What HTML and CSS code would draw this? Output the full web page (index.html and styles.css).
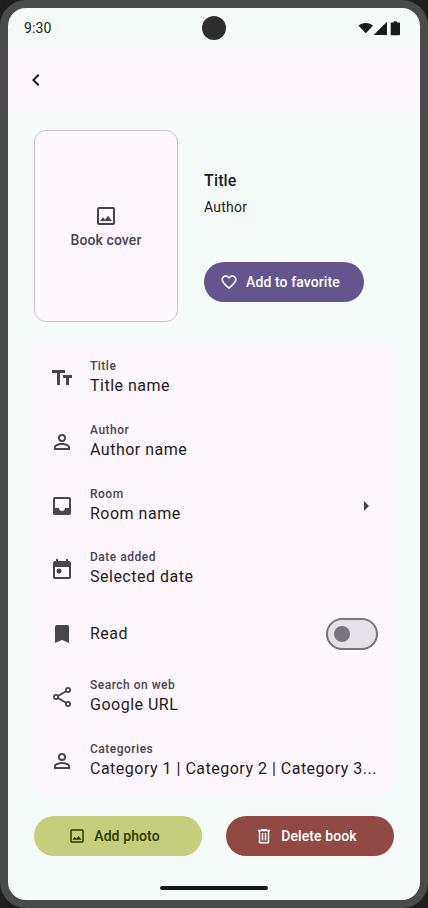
FILE: index.html
```html
<!DOCTYPE html>
<html lang="en">
<head>
<meta charset="utf-8">
<title>Book details</title>
<link rel="stylesheet" href="styles.css">
</head>
<body>
<svg class="defs" width="0" height="0">
  <symbol id="person" viewBox="0 0 24 24"><path d="M12 5.900a2.100 2.100 0 1 1 0 4.200 2.100 2.100 0 0 1 0-4.200m0 9c2.970 0 6.100 1.460 6.100 2.100v1.100H5.900V17c0-.64 3.130-2.100 6.100-2.100M12 4a4 4 0 1 0 0 8 4 4 0 0 0 0-8m0 9c-2.670 0-8 1.340-8 4v3h16v-3c0-2.660-5.330-4-8-4"/></symbol>
  <symbol id="image" viewBox="0 0 24 24"><path d="M19 5v14H5V5h14m0-2H5c-1.100 0-2 .9-2 2v14c0 1.100.9 2 2 2h14c1.100 0 2-.9 2-2V5c0-1.100-.9-2-2-2m-4.860 8.860-3 3.870L9 13.140 6 17h12z"/></symbol>
</svg>
<div class="phone">
  <header class="status">
    <span class="time">9:30</span>
    <span class="camera"></span>
    <svg class="signals" width="46" height="18" viewBox="0 0 46 18"><path d="M3.600 6.700C7 3 14.600 3 18 6.700L10.800 14.200z"/><path d="M32 2.800v13.200H18.600z"/><path d="M38.800 2.300h3v1.300H44c.6 0 1 .4 1 1v10.600c0 .6-.4 1-1 1h-7.300c-.6 0-1-.4-1-1V4.600c0-.6.400-1 1-1h2.100z"/></svg>
  </header>
  <nav class="appbar">
    <svg class="icon" viewBox="0 0 24 24"><path d="M15.400 7.400 14 6l-6 6 6 6 1.400-1.400L10.800 12z"/></svg>
  </nav>
  <main class="content">
    <section class="hero">
      <div class="cover"><svg class="icon" viewBox="0 0 24 24"><use href="#image"/></svg><span>Book cover</span></div>
      <div class="info">
        <h1>Title</h1>
        <p>Author</p>
        <button class="btn favorite"><svg viewBox="0 0 24 24"><path d="M16.500 3c-1.740 0-3.410.81-4.500 2.090C10.910 3.810 9.240 3 7.500 3 4.420 3 2 5.420 2 8.500c0 3.780 3.400 6.860 8.550 11.540L12 21.350l1.450-1.320C18.600 15.360 22 12.280 22 8.500 22 5.420 19.580 3 16.500 3m-4.400 15.550-.1.100-.1-.1C7.140 14.240 4 11.390 4 8.500 4 6.500 5.500 5 7.500 5c1.540 0 3.040.99 3.570 2.360h1.870C13.460 5.990 14.960 5 16.500 5c2 0 3.500 1.500 3.500 3.500 0 2.890-3.140 5.740-7.900 10.050"/></svg>Add to favorite</button>
      </div>
    </section>
    <section class="list">
      <div class="row"><svg class="icon" viewBox="0 0 24 24"><path d="M2 4v3h5v12h3V7h5V4zm20 5h-9v3h3v7h3v-7h3z"/></svg><div class="text"><small>Title</small><span>Title name</span></div></div>
      <div class="row"><svg class="icon" viewBox="0 0 24 24"><use href="#person"/></svg><div class="text"><small>Author</small><span>Author name</span></div></div>
      <div class="row"><svg class="icon" viewBox="0 0 24 24"><path d="M19 3H5c-1.100 0-2 .9-2 2v14c0 1.100.9 2 2 2h14c1.100 0 2-.9 2-2V5c0-1.100-.9-2-2-2m0 11h-4a3 3 0 0 1-6 0H5V5h14z"/></svg><div class="text"><small>Room</small><span>Room name</span></div><svg class="icon" viewBox="0 0 24 24"><path d="m10 17 5-5-5-5z"/></svg></div>
      <div class="row"><svg class="icon" viewBox="0 0 24 24"><path d="M19 4h-1V2h-2v2H8V2H6v2H5c-1.100 0-2 .9-2 2v14c0 1.100.9 2 2 2h14c1.100 0 2-.9 2-2V6c0-1.100-.9-2-2-2m0 16H5V10h14z"/><circle cx="9" cy="14" r="2.500"/></svg><div class="text"><small>Date added</small><span>Selected date</span></div></div>
      <div class="row single"><svg class="icon" viewBox="0 0 24 24"><path d="M17 3H7c-1.100 0-2 .9-2 2v16l7-3 7 3V5c0-1.100-.9-2-2-2"/></svg><div class="text"><span>Read</span></div><div class="switch"><i></i></div></div>
      <div class="row"><svg class="icon line" viewBox="0 0 24 24"><path d="m8 11 8-4.800M8 13l8 4.800"/><circle cx="6" cy="12" r="2.100"/><circle cx="18" cy="5" r="2.100"/><circle cx="18" cy="19" r="2.100"/></svg><div class="text"><small>Search on web</small><span>Google URL</span></div></div>
      <div class="row"><svg class="icon" viewBox="0 0 24 24"><use href="#person"/></svg><div class="text"><small>Categories</small><span>Category 1 | Category 2 | Category 3...</span></div></div>
    </section>
    <section class="actions">
      <button class="btn photo"><svg viewBox="0 0 24 24"><use href="#image"/></svg>Add photo</button>
      <button class="btn delete"><svg viewBox="0 0 24 24"><path fill-rule="evenodd" d="M9 2.500h6l1 1h4v2h-1V20a2 2 0 0 1-2 2H7a2 2 0 0 1-2-2V5.500H4v-2h4zm-2 3V20h10V5.500zM9 8h2v10H9zm4 0h2v10h-2z"/></svg>Delete book</button>
    </section>
  </main>
  <footer class="home"><span></span></footer>
</div>
</body>
</html>
```

FILE: styles.css
```css
* { box-sizing: border-box; }
body { margin: 0; background: #1e1e1e; font-family: Roboto, sans-serif; color: #1d1b20; }
.defs { display: block; width: 0; height: 0; }
svg { fill: currentColor; flex: none; display: block; }
.phone { width: 428px; height: 908px; border: 8px solid #4a4a4a; border-radius: 26px; background: #f5fbf8; overflow: hidden; display: flex; flex-direction: column; }
.status { height: 40px; padding: 0 16px; display: grid; grid-template-columns: 1fr 24px 1fr; align-items: center; color: #171d1b; }
.time { font-size: 14px; line-height: 20px; letter-spacing: .14px; }
.camera { width: 24px; height: 24px; border-radius: 50%; background: #2e2e2e; }
.signals { justify-self: end; margin-right: 3px; }
.appbar { height: 64px; background: #fef7ff; padding: 0 16px; display: flex; align-items: center; }
.icon { width: 24px; height: 24px; }
.content { padding: 18px 26px 0; }
.hero { display: flex; gap: 26px; height: 192px; }
.cover { width: 144px; height: 192px; border: 1px solid #cac4d0; border-radius: 12px; background: #fef7ff; color: #49454f; display: flex; flex-direction: column; align-items: center; justify-content: center; padding-top: 2px; font-size: 14px; font-weight: 500; line-height: 20px; letter-spacing: .1px; }
.cover span { margin-top: 2px; }
.info { padding-top: 39px; }
h1 { margin: 0; font-size: 16px; line-height: 24px; font-weight: 500; letter-spacing: .15px; }
p { margin: 4px 0 0; font-size: 14px; line-height: 20px; letter-spacing: .25px; }
.btn { border: 0; height: 40px; border-radius: 20px; padding: 0; display: flex; align-items: center; justify-content: center; gap: 8px; font: 500 14px/20px Roboto, sans-serif; letter-spacing: .1px; color: #fff; }
.btn svg { width: 18px; height: 18px; }
.favorite { width: 160px; margin-top: 45.4px; padding-right: 8px; background: #65558f; }
.list { margin-top: 23.8px; background: #fef7ff; }
.row { height: 63.9px; padding: 0 16px; display: flex; align-items: center; gap: 16px; color: #49454f; }
.single { padding-top: 1px; }
.text { flex: 1; min-width: 0; display: flex; flex-direction: column; white-space: nowrap; }
.text small { font-size: 12px; line-height: 16px; font-weight: 500; letter-spacing: .5px; }
.text span { font-size: 16px; line-height: 24px; letter-spacing: .5px; color: #1d1b20; }
.line { fill: none; stroke: currentColor; stroke-width: 1.800; }
.switch { width: 52px; height: 32px; border: 2px solid #79747e; border-radius: 16px; background: #e6e0e9; display: flex; align-items: center; padding-left: 6px; }
.switch i { width: 16px; height: 16px; border-radius: 50%; background: #79747e; }
.actions { margin-top: 22.9px; display: flex; gap: 24px; }
.actions .btn { width: 168px; padding-right: 8px; }
.photo { background: #c5ce7c; color: #303600; }
.delete { background: #904a43; }
.home { margin-top: auto; padding-bottom: 10px; display: flex; justify-content: center; }
.home span { width: 108px; height: 4px; border-radius: 2px; background: #171d1b; }
```
